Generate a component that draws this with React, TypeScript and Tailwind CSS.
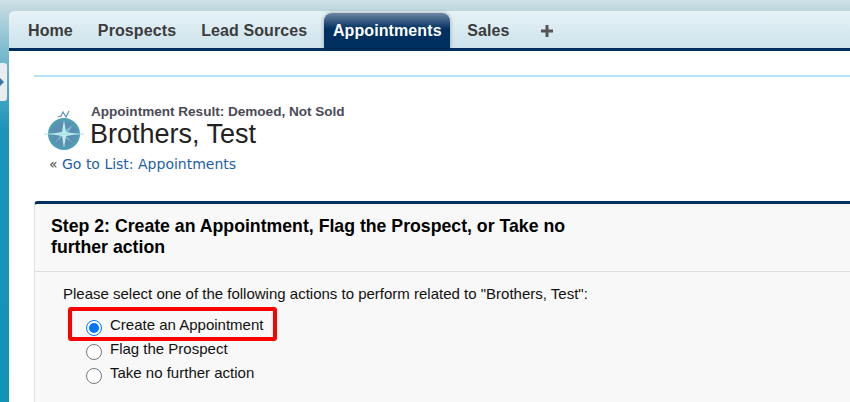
export default function App() {
  const sans = "font-['Liberation_Sans',Arial,sans-serif]";
  return (
    <div className={`relative w-[850px] h-[402px] overflow-hidden flex flex-col pt-[11px] pl-[9px] bg-[linear-gradient(180deg,#cfe2e8_0px,#bcd6de_11px,#7fbcd0_50px,#1a94bb_130px,#1293b9_402px)] ${sans}`}>
      {/* sidebar handle */}
      <div className="absolute left-0 top-[63px] w-[7px] h-[38px] bg-[#e9edf0] rounded-r-[3px] flex items-center">
        <div className="w-0 h-0 border-y-[4px] border-y-transparent border-l-[4px] border-l-[#3a78a8]" />
      </div>
      <div className="flex-1 flex flex-col bg-white rounded-tl-[6px] min-h-0">
        {/* nav */}
        <div className="h-[40px] shrink-0 flex items-end pl-[10px] rounded-tl-[6px] border-b-[3px] border-[#003060] bg-[linear-gradient(180deg,#e6f2f6,#cde3ec)]">
          {["Home", "Prospects", "Lead Sources"].map((t) => (
            <div key={t} className="h-[35px] px-[9px] mr-[7px] flex items-center text-[16px] tracking-[0.1px] font-bold text-[#3c3c3c]">{t}</div>
          ))}
          <div className="h-[35px] ml-[1px] w-[126px] flex items-center justify-center text-[16px] tracking-[0.1px] font-bold text-white rounded-t-[8px] bg-[linear-gradient(180deg,#6c86a2_0px,#003060_16px)] shadow-[0_0_4px_rgba(0,0,0,0.3)]">Appointments</div>
          <div className="h-[35px] pl-[17px] flex items-center text-[16px] tracking-[0.1px] font-bold text-[#3c3c3c]">Sales</div>
          <div className="h-[35px] ml-[31px] flex items-center">
            <svg width="12" height="12" viewBox="0 0 12 12"><path d="M4.500 0h3v4.500H12v3H7.500V12h-3V7.500H0v-3h4.500z" fill="#555" /></svg>
          </div>
        </div>
        <div className="flex-1 pl-[25px] min-h-0">
          <div className="h-[2px] mt-[24px] bg-[#b5e3f4]" />
          {/* header */}
          <div className="flex mt-[28px] pl-[10px] h-[50px]">
            <svg width="40" height="42" viewBox="0 0 40 42" className="shrink-0 mt-[5px]">
              <path d="M14 7l3-1 2-4 3 5 3-6" fill="none" stroke="#5a8fc0" strokeWidth="1.200" />
              <circle cx="20" cy="24" r="16" fill="#4f9db5" />
              <circle cx="20" cy="24" r="12.500" fill="#5c8fb2" />
              <path d="M11 15l7.500 7.500 10.500-7.500-7.500 10.500 7.500 7.500-10.500-7.500-7.500 7.500 7.500-10.500z" fill="#7cc4d0" />
              <path d="M20 10l2 12 12 2-12 2-2 12-2-12-12-2 12-2z" fill="#bdeeee" />
              <path d="M0 24h40" stroke="#a5e2e4" strokeWidth="1" />
            </svg>
            <div className="ml-[6px] -mt-[1px]">
              <div className="pl-[1px] text-[13.55px] leading-[16px] font-bold text-[#4a4a56]">Appointment Result: Demoed, Not Sold</div>
              <div className="text-[27px] leading-[29px] text-[#222]">Brothers, Test</div>
            </div>
          </div>
          <div className="pl-[15px] text-[14px] leading-[18px] font-['DejaVu_Sans',sans-serif] text-[#1b5faa]">
            <span className="text-[#444]">« </span>Go to List: Appointments
          </div>
          {/* card */}
          <div className="mt-[28px] border-t-[3px] border-l border-[#e0e0e0] border-t-[#003060] rounded-tl-[4px] bg-[#f8f8f8] h-[300px]">
            <div className="h-[68px] border-b border-[#dedede] pl-[16px] pt-[12px] w-full">
              <div className="w-[530px] text-[17.7px] leading-[21px] font-bold text-black">Step 2: Create an Appointment, Flag the Prospect, or Take no further action</div>
            </div>
            <div className="pl-[28px] pt-[13px] text-[15px] text-[#111]">
              <div className="leading-[18px]">Please select one of the following actions to perform related to "Brothers, Test":</div>
              <div className="relative mt-[8px] pl-[23px] flex flex-col">
                <div className="absolute left-[5px] top-[-4px] w-[209px] h-[34px] border-[4px] border-[#ff0000] rounded-[3px]" />
                {["Create an Appointment", "Flag the Prospect", "Take no further action"].map((t, i) => (
                  <label key={t} className="h-[24px] flex items-start">
                    <span className={`mt-[9px] w-[16px] h-[16px] rounded-full border bg-white shrink-0 flex items-center justify-center ${i === 0 ? "border-[#0075ff] border-[1.5px]" : "border-[#767676]"}`}>
                      {i === 0 && <span className="w-[10px] h-[10px] rounded-full bg-[#0075ff]" />}
                    </span>
                    <span className="ml-[8px] mt-[5px] leading-[18px]">{t}</span>
                  </label>
                ))}
              </div>
            </div>
          </div>
        </div>
      </div>
    </div>
  );
}
